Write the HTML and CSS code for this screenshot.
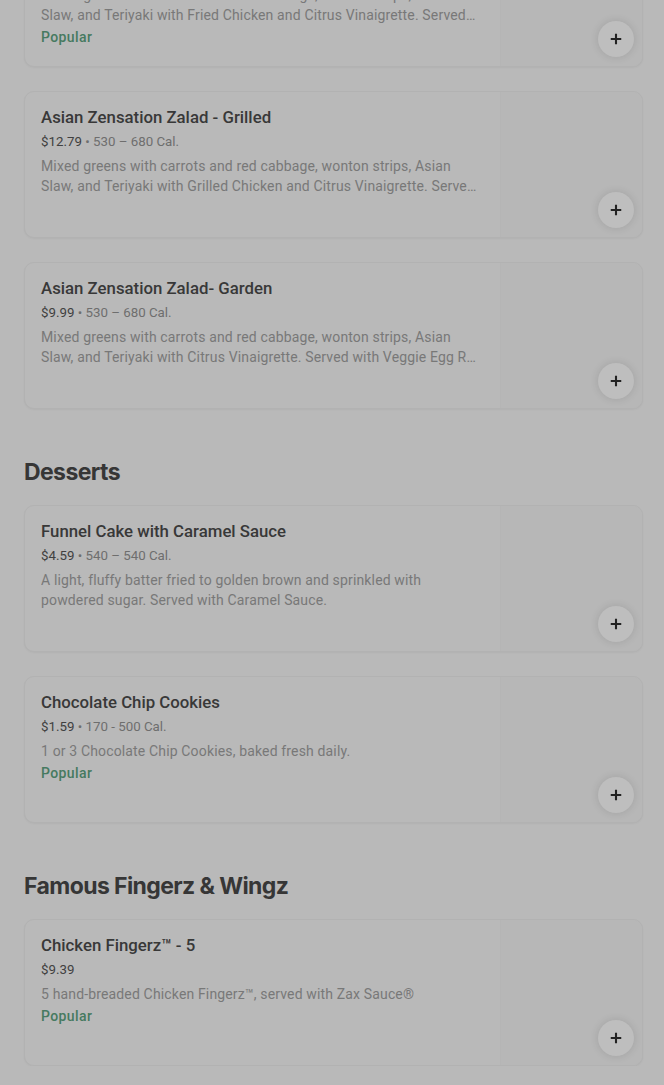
FILE: index.html
```html
<!DOCTYPE html>
<html>
<head>
<meta charset="utf-8">
<link rel="stylesheet" href="styles.css">
</head>
<body>
<main class="menu">
  <section class="section first">
    <div class="cards">
      <article class="card">
        <div class="info">
          <h3 class="name">Asian Zensation Zalad - Fried</h3>
          <div class="meta"><span class="price">$12.79</span> • 530 – 680 Cal.</div>
          <p class="desc">Mixed greens with carrots and red cabbage, wonton strips, Asian Slaw, and Teriyaki with Fried Chicken and Citrus Vinaigrette. Served with Veggie Egg Roll.</p>
          <div class="tag">Popular</div>
        </div>
        <div class="thumb"><button class="add" aria-label="Add"><svg viewBox="0 0 16 16" width="14" height="14"><path d="M8 2v12M2 8h12" stroke="#222" stroke-width="2.4" fill="none"/></svg></button></div>
      </article>
      <article class="card">
        <div class="info">
          <h3 class="name">Asian Zensation Zalad - Grilled</h3>
          <div class="meta"><span class="price">$12.79</span> • 530 – 680 Cal.</div>
          <p class="desc">Mixed greens with carrots and red cabbage, wonton strips, Asian Slaw, and Teriyaki with Grilled Chicken and Citrus Vinaigrette. Served with Veggie Egg Roll.</p>
        </div>
        <div class="thumb"><button class="add" aria-label="Add"><svg viewBox="0 0 16 16" width="14" height="14"><path d="M8 2v12M2 8h12" stroke="#222" stroke-width="2.4" fill="none"/></svg></button></div>
      </article>
      <article class="card">
        <div class="info">
          <h3 class="name">Asian Zensation Zalad- Garden</h3>
          <div class="meta"><span class="price">$9.99</span> • 530 – 680 Cal.</div>
          <p class="desc">Mixed greens with carrots and red cabbage, wonton strips, Asian Slaw, and Teriyaki with Citrus Vinaigrette. Served with Veggie Egg Roll and Texas Toast.</p>
        </div>
        <div class="thumb"><button class="add" aria-label="Add"><svg viewBox="0 0 16 16" width="14" height="14"><path d="M8 2v12M2 8h12" stroke="#222" stroke-width="2.4" fill="none"/></svg></button></div>
      </article>
    </div>
  </section>

  <section class="section">
    <h2 class="heading">Desserts</h2>
    <div class="cards">
      <article class="card">
        <div class="info">
          <h3 class="name">Funnel Cake with Caramel Sauce</h3>
          <div class="meta"><span class="price">$4.59</span> • 540 – 540 Cal.</div>
          <p class="desc">A light, fluffy batter fried to golden brown and sprinkled with powdered sugar. Served with Caramel Sauce.</p>
        </div>
        <div class="thumb"><button class="add" aria-label="Add"><svg viewBox="0 0 16 16" width="14" height="14"><path d="M8 2v12M2 8h12" stroke="#222" stroke-width="2.4" fill="none"/></svg></button></div>
      </article>
      <article class="card">
        <div class="info">
          <h3 class="name">Chocolate Chip Cookies</h3>
          <div class="meta"><span class="price">$1.59</span> • 170 - 500 Cal.</div>
          <p class="desc">1 or 3 Chocolate Chip Cookies, baked fresh daily.</p>
          <div class="tag">Popular</div>
        </div>
        <div class="thumb"><button class="add" aria-label="Add"><svg viewBox="0 0 16 16" width="14" height="14"><path d="M8 2v12M2 8h12" stroke="#222" stroke-width="2.4" fill="none"/></svg></button></div>
      </article>
    </div>
  </section>

  <section class="section">
    <h2 class="heading">Famous Fingerz &amp; Wingz</h2>
    <div class="cards">
      <article class="card">
        <div class="info">
          <h3 class="name">Chicken Fingerz™ - 5</h3>
          <div class="meta"><span class="price">$9.39</span></div>
          <p class="desc">5 hand-breaded Chicken Fingerz™, served with Zax Sauce®</p>
          <div class="tag">Popular</div>
        </div>
        <div class="thumb"><button class="add" aria-label="Add"><svg viewBox="0 0 16 16" width="14" height="14"><path d="M8 2v12M2 8h12" stroke="#222" stroke-width="2.4" fill="none"/></svg></button></div>
      </article>
    </div>
  </section>
</main>
</body>
</html>
```

FILE: styles.css
```css
html, body {
  margin: 0;
  padding: 0;
  background: #b9b9b9;
  overflow: hidden;
}
body {
  font-family: Roboto, "Liberation Sans", Arial, sans-serif;
  color: #333;
}
.menu {
  padding: 0 21px 0 24px;
  margin-top: -80px;
  display: flex;
  flex-direction: column;
  gap: 47px;
}
.section {
  display: flex;
  flex-direction: column;
}
.heading {
  margin: 0 0 17px 0;
  font-family: Inter, Roboto, sans-serif;
  font-size: 23px;
  line-height: 32px;
  font-weight: 700;
  letter-spacing: -0.6px;
  color: #363636;
}
.cards {
  display: flex;
  flex-direction: column;
  gap: 24px;
}
.card {
  display: flex;
  height: 147px;
  box-sizing: border-box;
  border: 1px solid #b2b2b2;
  border-radius: 10px;
  background: #b9b9b9;
  box-shadow: 0 1px 2px rgba(0,0,0,0.04);
  overflow: hidden;
}
.info {
  flex: 1;
  padding: 14px 16px 0 16px;
  min-width: 0;
}
.name {
  margin: 0;
  font-size: 16.8px;
  line-height: 22px;
  font-weight: 500;
  color: #383838;
}
.meta {
  margin-top: 4px;
  font-size: 13.3px;
  line-height: 20px;
  color: #6e6e6e;
}
.price {
  color: #404040;
}
.desc {
  margin: 4px 0 0 0;
  font-size: 14px;
  line-height: 20px;
  letter-spacing: 0.15px;
  color: #787878;
  display: -webkit-box;
  -webkit-line-clamp: 2;
  -webkit-box-orient: vertical;
  overflow: hidden;
  max-width: 442px;
}
.tag {
  margin-top: 2px;
  font-size: 14px;
  line-height: 20px;
  font-weight: 500;
  letter-spacing: 0.4px;
  color: #467a60;
}
.thumb {
  width: 142px;
  flex: none;
  background: #b7b7b7;
  border-left: 1px solid #b5b5b5;
  display: flex;
  align-items: flex-end;
  justify-content: flex-end;
  padding: 0 8px 9px 0;
  box-sizing: border-box;
}
.add {
  width: 36px;
  height: 36px;
  border-radius: 50%;
  border: none;
  background: #bebebe;
  box-shadow: 0 0 8px rgba(0,0,0,0.12);
  display: flex;
  align-items: center;
  justify-content: center;
  padding: 0;
}
```
